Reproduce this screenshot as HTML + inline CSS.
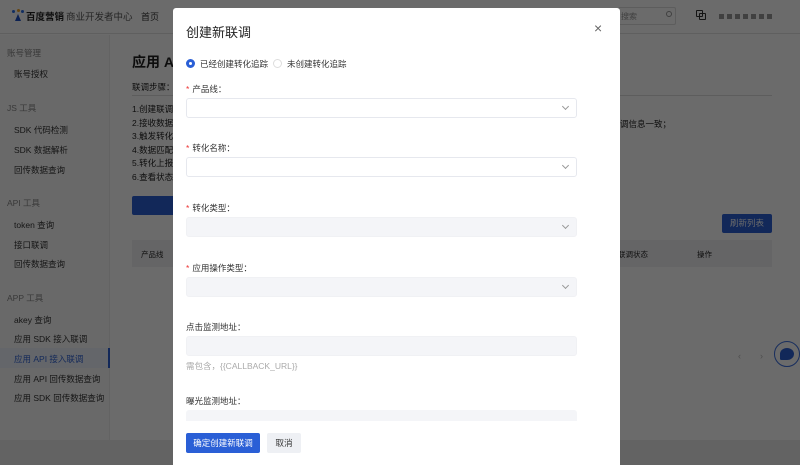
<!DOCTYPE html>
<html style="background:#6b6b6b;width:800px;height:465px;overflow:hidden"><head><meta charset="utf-8"><style>
*{margin:0;padding:0;box-sizing:border-box}
html,body{width:800px;height:465px;overflow:hidden;background:#6b6b6b}
body{position:relative;font-family:"Liberation Sans","Noto Sans CJK SC",sans-serif;color:#0d0d0d;font-size:9px}
.a{position:absolute}
.hdr{left:0;top:0;width:800px;height:34px;border-bottom:1px solid #5f5f5f;background:#6b6b6b}
.side{left:0;top:35px;width:110px;height:430px;background:#696969;border-right:1px solid #636363}
.side div{position:absolute;left:14px;font-size:8.5px;color:#151515}
.side .g{left:7px;color:#393939}
.m{left:173px;top:8px;width:447px;height:457px;background:#fff;border-radius:3px 3px 0 0;z-index:10}
.m .lb{position:absolute;left:13px;font-size:8.5px;color:#333}
.m .lb b{color:#e33;font-weight:normal;margin-right:3px}
.in{position:absolute;left:13px;width:391px;height:20px;border:1px solid #e6e8ee;border-radius:3px;background:#fff}
.in.d{background:#f4f5f8;border-color:#f0f1f4}
.in i{position:absolute;right:8px;top:5px;width:5px;height:5px;border-right:1px solid #999;border-bottom:1px solid #999;transform:rotate(45deg)}
</style></head><body>
<div class="a hdr">
 <div class="a" style="left:12px;top:9px;width:12px;height:12px">
  <span class="a" style="left:0;top:1px;width:3px;height:3px;background:#112e61;border-radius:50%"></span>
  <span class="a" style="left:5px;top:0;width:3px;height:3px;background:#67450f;border-radius:50%"></span>
  <span class="a" style="left:9px;top:1px;width:3px;height:3px;background:#112e61;border-radius:50%"></span>
  <span class="a" style="left:3px;top:5px;width:6px;height:7px;background:#0c2152;clip-path:polygon(50% 0,100% 100%,0 100%)"></span>
 </div>
 <div class="a" style="left:26px;top:9px;font-size:9.5px;font-weight:bold;color:#0e0e0e">百度营销</div>
 <div class="a" style="left:66px;top:9px;font-size:9.5px;color:#242424">商业开发者中心</div>
 <div class="a" style="left:141px;top:10px;font-size:9px;color:#151515">首页</div>
 <div class="a" style="left:618px;top:7px;width:58px;height:18px;border:1px solid #5d5d5d;border-radius:2px;font-size:8px;color:#404040;padding:3px 0 0 2px">搜索</div>
 <div class="a" style="left:666px;top:11px;width:6px;height:6px;border:1px solid #404040;border-radius:50%"></div>
 <div class="a" style="left:696px;top:10px;width:7px;height:7px;border:1px solid #151515;border-radius:1px"></div>
 <div class="a" style="left:699px;top:13px;width:7px;height:7px;border:1px solid #151515;border-radius:1px"></div>
 <div class="a" style="left:719px;top:14px;width:56px;height:5px;background:repeating-linear-gradient(90deg,#404040 0 5px,transparent 5px 8px)"></div>
</div>
<div class="a side">
 <div class="g" style="top:12px">账号管理</div>
 <div style="top:33px">账号授权</div>
 <div class="g" style="top:67px">JS 工具</div>
 <div style="top:89px">SDK 代码检测</div>
 <div style="top:109px">SDK 数据解析</div>
 <div style="top:129px">回传数据查询</div>
 <div class="g" style="top:162px">API 工具</div>
 <div style="top:184px">token 查询</div>
 <div style="top:204px">接口联调</div>
 <div style="top:223px">回传数据查询</div>
 <div class="g" style="top:257px">APP 工具</div>
 <div style="top:279px">akey 查询</div>
 <div style="top:298px">应用 SDK 接入联调</div>
 <div style="left:0;top:313px;width:110px;height:20px;background:#64666a;border-right:2px solid #122859"></div>
 <div style="top:318px;color:#122859">应用 API 接入联调</div>
 <div style="top:338px">应用 API 回传数据查询</div>
 <div style="top:357px">应用 SDK 回传数据查询</div>
</div>
<div class="a" style="left:132px;top:52px;font-size:14px;font-weight:bold">应用 API 接入联调</div>
<div class="a" style="left:132px;top:81px;font-size:8.5px">联调步骤：</div>
<div class="a" style="left:132px;top:95px;width:640px;height:1px;background:#5d5d5d"></div>
<div class="a" style="left:132px;top:103px;font-size:8.5px;line-height:13.6px">1.创建联调<br>2.接收数据<br>3.触发转化<br>4.数据匹配<br>5.转化上报<br>6.查看状态</div>
<div class="a" style="left:620px;top:118px;font-size:8.5px">调信息一致；</div>
<div class="a" style="left:132px;top:196px;width:50px;height:19px;background:#122859;border-radius:2px"></div>
<div class="a" style="left:722px;top:214px;width:50px;height:19px;background:#122859;border-radius:2px;color:#6b6b6b;font-size:8.5px;text-align:center;line-height:19px">刷新列表</div>
<div class="a" style="left:132px;top:240px;width:640px;height:27px;background:#656566"></div>
<div class="a" style="left:141px;top:249px;font-size:7.5px">产品线</div>
<div class="a" style="left:618px;top:249px;font-size:7.5px">联调状态</div>
<div class="a" style="left:697px;top:249px;font-size:7.5px">操作</div>
<div class="a" style="left:738px;top:351px;font-size:9px;color:#4e4e4e">‹</div>
<div class="a" style="left:760px;top:351px;font-size:9px;color:#4e4e4e">›</div>
<div class="a" style="left:774px;top:341px;width:26px;height:26px;border:1px solid #182e5e;border-radius:50%;background:#6b6b6b"></div>
<div class="a" style="left:780px;top:348px;width:14px;height:12px;background:#122859;border-radius:50% 50% 50% 10%"></div>
<div class="a" style="left:0;top:440px;width:800px;height:25px;background:#636363"></div>
<div class="a m">
 <div class="a" style="left:13px;top:14px;font-size:13px;color:#222">创建新联调</div>
 <div class="a" style="left:421px;top:13px;font-size:14px;color:#666;line-height:14px">×</div>
 <div class="a" style="left:13px;top:51px;width:9px;height:9px;border:3px solid #2a5fd6;border-radius:50%"></div>
 <div class="a" style="left:27px;top:50px;font-size:8.5px;color:#333">已经创建转化追踪</div>
 <div class="a" style="left:100px;top:51px;width:9px;height:9px;border:1px solid #ddd;border-radius:50%"></div>
 <div class="a" style="left:114px;top:50px;font-size:8.5px;color:#333">未创建转化追踪</div>
 <div class="lb" style="top:75px"><b>*</b>产品线：</div>
 <div class="in" style="top:90px"><i></i></div>
 <div class="lb" style="top:134px"><b>*</b>转化名称：</div>
 <div class="in" style="top:149px"><i></i></div>
 <div class="lb" style="top:194px"><b>*</b>转化类型：</div>
 <div class="in d" style="top:209px"><i></i></div>
 <div class="lb" style="top:254px"><b>*</b>应用操作类型：</div>
 <div class="in d" style="top:269px"><i></i></div>
 <div class="lb" style="top:313px">点击监测地址：</div>
 <div class="in d" style="top:328px"></div>
 <div class="lb" style="top:352px;color:#aaa">需包含，{{CALLBACK_URL}}</div>
 <div class="lb" style="top:387px">曝光监测地址：</div>
 <div class="a" style="left:13px;top:402px;width:391px;height:11px;background:#f4f5f8;border-radius:3px 3px 0 0"></div>
 <div class="a" style="left:13px;top:425px;width:74px;height:20px;background:#2a5fd6;border-radius:2px;color:#fff;font-size:8.5px;text-align:center;line-height:20px">确定创建新联调</div>
 <div class="a" style="left:94px;top:425px;width:34px;height:20px;background:#eef0f4;border-radius:2px;color:#333;font-size:8.5px;text-align:center;line-height:20px">取消</div>
</div>
</body></html>
